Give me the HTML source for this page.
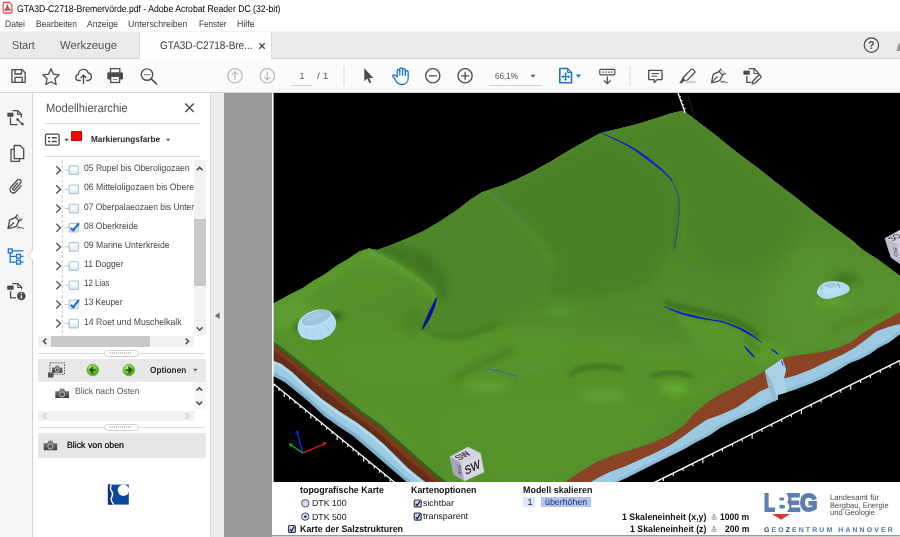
<!DOCTYPE html>
<html lang="de"><head><meta charset="utf-8"><title>GTA3D-C2718-Bremervörde.pdf - Adobe Acrobat Reader DC (32-bit)</title>
<style>
html,body{margin:0;padding:0;}
body{width:900px;height:537px;overflow:hidden;position:relative;background:#fff;font-family:'Liberation Sans', sans-serif;}
.a{position:absolute;}
.t{position:absolute;white-space:pre;font-family:'Liberation Sans', sans-serif;text-rendering:geometricPrecision;}
svg{position:absolute;overflow:visible;}
</style></head><body>
<!-- window chrome -->
<div class="a" style="left:0;top:0;width:900px;height:32px;background:#fff"></div>
<div class="a" style="left:0;top:31px;width:900px;height:1px;background:#f1f1f1"></div>
<div class="a" style="left:0;top:32px;width:900px;height:26px;background:#eaeaea"></div>
<div class="a" style="left:0;top:58px;width:900px;height:1px;background:#d4d4d4"></div>
<div class="a" style="left:138.800px;top:32px;width:133.500px;height:27px;background:#fefefe;border-left:1px solid #dcdcdc;border-right:1px solid #dcdcdc;box-sizing:border-box"></div>
<div class="a" style="left:0;top:59px;width:900px;height:33px;background:#fbfbfb"></div>
<div class="a" style="left:0;top:92px;width:900px;height:1px;background:#d6d6d6"></div>
<!-- left rail -->
<div class="a" style="left:0;top:93px;width:32px;height:444px;background:#f6f6f6"></div>
<div class="a" style="left:32px;top:93px;width:1px;height:444px;background:#d2d2d2"></div>
<!-- panel -->
<div class="a" style="left:33px;top:93px;width:177px;height:444px;background:#fff"></div>
<div class="a" style="left:210px;top:93px;width:1px;height:444px;background:#dcdcdc"></div>
<div class="a" style="left:211px;top:93px;width:13px;height:444px;background:#ededed"></div>
<div class="a" style="left:224px;top:93px;width:48px;height:444px;background:#999"></div>
<div class="a" style="left:272px;top:93px;width:628px;height:444px;background:#999"></div>
<!-- panel pieces -->
<div class="a" style="left:45px;top:123px;width:155px;height:1px;background:#dadada"></div>
<div class="a" style="left:45px;top:155.5px;width:155px;height:1px;background:#dadada"></div>
<div class="a" style="left:70.8px;top:130.9px;width:10.8px;height:10.5px;background:#f80000"></div>
<!-- tree vscroll -->
<div class="a" style="left:194px;top:160px;width:11.5px;height:176px;background:#f1f1f1"></div>
<div class="a" style="left:194px;top:219px;width:11.5px;height:66.5px;background:#c9c9c9"></div>
<!-- tree hscroll -->
<div class="a" style="left:38px;top:336px;width:156px;height:10.5px;background:#f1f1f1"></div>
<div class="a" style="left:50.5px;top:336px;width:99px;height:10.5px;background:#c9c9c9"></div>
<!-- splitters -->
<div class="a" style="left:38px;top:352.7px;width:167px;height:1px;background:#dcdcdc"></div>
<div class="a" style="left:104px;top:349.5px;width:34.5px;height:7.5px;border:1px solid #d0d0d0;border-radius:4px;background:#fff;box-sizing:border-box"></div>
<div class="a" style="left:110px;top:351.8px;width:22px;height:2.6px;background:repeating-linear-gradient(90deg,#c4c4c4 0 1px,#fff 1px 2px)"></div>
<div class="a" style="left:38px;top:427px;width:167px;height:1px;background:#dcdcdc"></div>
<div class="a" style="left:104px;top:423.6px;width:34.5px;height:7.5px;border:1px solid #d0d0d0;border-radius:4px;background:#fff;box-sizing:border-box"></div>
<div class="a" style="left:110px;top:425.9px;width:22px;height:2.6px;background:repeating-linear-gradient(90deg,#c4c4c4 0 1px,#fff 1px 2px)"></div>
<!-- options bar -->
<div class="a" style="left:38px;top:358.5px;width:167.5px;height:23.2px;background:#e8e8e8"></div>
<!-- view list scrollbars -->
<div class="a" style="left:193.6px;top:381.7px;width:12px;height:27px;background:#f7f7f7"></div>
<div class="a" style="left:38px;top:410.7px;width:155.6px;height:10.6px;background:#f1f1f1"></div>
<!-- blick von oben bar -->
<div class="a" style="left:38px;top:433px;width:167.5px;height:24.7px;background:#e6e6e6"></div>

<svg class="a" style="left:0;top:0" width="900" height="537" viewBox="0 0 900 537" fill="none">
<!-- pdf icon -->
<path d="M4.100 2.400h5.300l2.500 2.500v7.300a.9.900 0 0 1-.9.900H4.100a.9.900 0 0 1-.9-.9V3.300a.9.900 0 0 1 .9-.9z" fill="#fff" stroke="#f03b3b" stroke-width="1.100"/>
<path d="M5.100 10.400c1.300-.9 2-2.500 2.200-4.900M7.300 5.500c.3 2.300 1.300 3.800 2.800 4.500M5.100 10.400c1.600-1 3.300-1.200 5-.4" stroke="#f03030" stroke-width="1.500" stroke-linecap="round"/>
<!-- tab close -->
<path d="M259.300 43.300l5.400 5.400M264.700 43.300l-5.400 5.400" stroke="#444" stroke-width="1.300"/>
<!-- help -->
<circle cx="871.400" cy="45.100" r="7.200" stroke="#4a4a4a" stroke-width="1.200"/>
<text x="871.400" y="48.700" font-size="10" font-weight="700" text-anchor="middle" fill="#4a4a4a" font-family="Liberation Sans, sans-serif">?</text>
<!-- bell partial -->
<path d="M896 51c.8-1 1.300-2 1.500-4.500.2-2 1.200-3.200 2.500-3.600V51z" fill="#9a9a9a"/>
<!-- save -->
<g stroke="#4b4b4b" stroke-width="1.300" stroke-linejoin="round">
<path d="M11.900 69.700h10.300l3 3v9.600h-13.300z"/>
<path d="M15 69.700v4.300h6.500v-4.300M15 82.300v-5h7.200v5"/>
</g>
<!-- star -->
<path d="M51 68.800l2.500 5.300 5.700.7-4.200 4 1.100 5.700-5.100-2.800-5.100 2.800 1.100-5.700-4.200-4 5.700-.7z" stroke="#4b4b4b" stroke-width="1.300" stroke-linejoin="round"/>
<!-- cloud upload -->
<path d="M80.300 80.500h-1.300c-1.800 0-3.200-1.400-3.200-3.100 0-1.600 1.100-2.800 2.600-3.100.2-2.800 2.300-4.900 5-4.900 2.300 0 4.200 1.500 4.800 3.600 1.800.2 3.200 1.700 3.200 3.600 0 2.100-1.600 3.800-3.600 3.900h-1.100" stroke="#4b4b4b" stroke-width="1.300" stroke-linecap="round"/>
<path d="M83.500 84v-8.500M80.600 78l2.900-2.900 2.900 2.900" stroke="#4b4b4b" stroke-width="1.300"/>
<!-- printer -->
<path d="M110.500 72.500v-3.800h9.300v3.800" stroke="#4b4b4b" stroke-width="1.300"/>
<rect x="107.300" y="72.300" width="15.700" height="7.200" rx="1.200" fill="#4b4b4b"/>
<rect x="110.700" y="76.300" width="8.900" height="6.200" fill="#fbfbfb" stroke="#4b4b4b" stroke-width="1.300"/>
<path d="M113 79.500h4.300" stroke="#888" stroke-width="1"/>
<!-- search -->
<circle cx="147" cy="74.600" r="5.700" stroke="#4b4b4b" stroke-width="1.400"/>
<path d="M151.200 78.800l5.300 5.200" stroke="#4b4b4b" stroke-width="1.700" stroke-linecap="round"/>
<path d="M144.200 74.600h1.200M146.400 74.600h1.200M148.600 74.600h1.200" stroke="#4b4b4b" stroke-width="1.200"/>
<!-- up / down (disabled) -->
<g stroke="#b9b9b9" stroke-width="1.200">
<circle cx="235" cy="75.800" r="7.200"/><path d="M235 80v-8M231.800 74.800l3.200-3.200 3.200 3.200"/>
<circle cx="267.300" cy="75.800" r="7.200"/><path d="M267.300 71.600v8M264.100 76.800l3.200 3.200 3.200-3.200"/>
</g>
<!-- page field underline -->
<path d="M291 85.500h21" stroke="#d0d0d0" stroke-width="1"/>
<path d="M344 66v20M630 66v20" stroke="#d9d9d9" stroke-width="1"/>
<!-- arrow cursor -->
<path d="M364.300 68.300v13l3-2.700 2.100 4.700 1.900-.8-2.100-4.600h4.200z" fill="#4b4b4b"/>
<!-- hand -->
<path d="M395 79.300L392.900 76.500C392.300 75.300 393.600 74 394.800 74.900L397.200 77V70.900C397.200 69 399.800 69 399.800 70.900V69.300C399.800 67.300 402.600 67.300 402.600 69.300V70C402.600 68.200 405.300 68.200 405.300 70V72C405.300 70.300 408.200 70.300 408.200 72V78C408.200 82 405.500 84.500 401.700 84.500C398.500 84.500 396.500 82.500 395 79.300Z" stroke="#1b73d8" stroke-width="1.300" stroke-linejoin="round"/>
<path d="M399.800 70.900V75.700M402.600 70V75.700M405.300 71.500V75.900" stroke="#1b73d8" stroke-width="1.200"/>
<!-- minus / plus -->
<g stroke="#4b4b4b" stroke-width="1.300">
<circle cx="432.800" cy="75.800" r="7.100"/><path d="M428.800 75.800h8"/>
<circle cx="465.100" cy="75.800" r="7.100"/><path d="M461.100 75.800h8M465.100 71.800v8"/>
</g>
<!-- zoom field -->
<path d="M489 85.500h52.500" stroke="#d0d0d0" stroke-width="1"/>
<path d="M530.600 74.800h4.800l-2.400 2.900z" fill="#555"/>
<!-- fit page (blue) -->
<path d="M559.800 68.500h7.500l4.200 4.200v10.100h-11.700z" stroke="#1b73d8" stroke-width="1.600" stroke-linejoin="round"/>
<path d="M567.500 68.700v3.800h3.800" stroke="#1b73d8" stroke-width="1"/>
<path d="M565.600 73.500v6.400M562.400 76.700h6.400" stroke="#1b73d8" stroke-width="1.200"/>
<path d="M564 74.300l1.600-2 1.600 2zM564 79.100l1.600 2 1.600-2zM563.200 75.100l-2 1.600 2 1.600zM568 75.100l2 1.600-2 1.600z" fill="#1b73d8"/>
<path d="M575.800 74.600h5.200l-2.600 3.100z" fill="#1b73d8"/>
<!-- scroll mode -->
<rect x="599.800" y="69.300" width="15" height="5.600" rx=".8" stroke="#4b4b4b" stroke-width="1.200"/>
<path d="M602.500 72.100h1.500M605.300 72.100h1.500M608.100 72.100h1.500M610.900 72.100h1.500" stroke="#4b4b4b" stroke-width="1.200"/>
<path d="M607.300 76.500v7M604 80.500l3.300 3.200 3.300-3.200" stroke="#4b4b4b" stroke-width="1.300"/>
<!-- comment -->
<path d="M648.700 70.300h13.300v9.300h-5l-2.800 3v-3h-5.500z" stroke="#4b4b4b" stroke-width="1.300" stroke-linejoin="round"/>
<path d="M651.500 73.600h7.700M651.500 76.200h5.700" stroke="#4b4b4b" stroke-width="1"/>
<!-- highlighter -->
<path d="M684.600 80.300l-1.700-2.600 8.300-8.300c1.300-1.300 4.700 2.100 3.400 3.400l-8.300 8.300z" stroke="#4b4b4b" stroke-width="1.300" stroke-linejoin="round"/>
<path d="M679.200 83.300l3.300-5.300 2.400 2.400-3.300 2.900z" fill="#4b4b4b"/>
<path d="M685 82h10.600" stroke="#d2d2d2" stroke-width="2.600"/>
<!-- sign pen (toolbar) -->
<g stroke="#4b4b4b" stroke-width="1.300" stroke-linejoin="round">
<path d="M711.500 82.600l1.700-8.200 5.800-2.800 3.500 3.300-2.600 5.600-4.700 1.600z"/>
<path d="M719.700 71.300l1.600-2.400 4.200 4.200-2.600 1.300z" fill="#d2d2d2" stroke="none"/>
<path d="M719 71.600l2.100-3M722.500 74.900l3.200-1.400"/>
<path d="M711.900 82.200l5-5" stroke-width="1.100"/>
<circle cx="717" cy="77.100" r=".8" fill="#4b4b4b" stroke="none"/>
<path d="M720.800 82.600c.7-2 1.500-2.400 1.600-.2.400-1.700 1.200-1.600 1.400 0 .5-1 1.200-1 1.700 0h2" stroke-width=".9"/>
</g>
<!-- doc edit -->
<g stroke="#4b4b4b" stroke-width="1.300" stroke-linejoin="round">
<path d="M748.500 68.600h5.700l4.600 4.800v2.200M746.800 76v6.300h4.600"/>
<path d="M754 68.800v4.700h4.600" stroke-width="1.100"/>
<rect x="743.800" y="71" width="5.600" height="3.300" fill="#4b4b4b" stroke-width=".8"/>
<path d="M752.200 83.900l.9-3.200 5.500-5.400c1.100-1 3.300 1.200 2.200 2.300l-5.500 5.400z"/>
</g>
<!-- left rail icons -->
<g stroke="#4b4b4b" stroke-width="1.300" stroke-linejoin="round">
<path d="M12.500 110.600h5.300l3.600 3.600v3.300M10.500 117.500v7.100h7"/>
<path d="M17.600 110.800v3.600h3.600" stroke-width="1.100"/>
<rect x="7.700" y="113.100" width="5.400" height="3.200" fill="#4b4b4b" stroke-width=".8"/>
<path d="M17.700 119.600l4.600 4.500" stroke-width="1.200"/><circle cx="17.600" cy="119.600" r="1.300" fill="#4b4b4b" stroke="none"/><circle cx="22.400" cy="124.100" r="1.400" fill="#4b4b4b" stroke="none"/>
<!-- pages -->
<path d="M14.200 145.500h6l3.500 3.500v9.700h-9.500z"/><path d="M14 149.300h-3v12h8.500v-2.600"/>
</g>
<!-- paperclip -->
<path transform="translate(16.200 186.300) rotate(42)" d="M3.300-3.800V4.300a3.300 3.300 0 0 1-6.600 0V-5.200a2.200 2.200 0 0 1 4.400 0V3.600a1.100 1.100 0 0 1-2.200 0V-3.600" stroke="#4b4b4b" stroke-width="1.300" stroke-linecap="round"/>
<!-- pen -->
<g transform="translate(-703.500 145.800)" stroke="#4b4b4b" stroke-width="1.300" stroke-linejoin="round">
<path d="M711.500 82.600l1.700-8.200 5.800-2.800 3.500 3.300-2.600 5.600-4.700 1.600z"/>
<path d="M719.700 71.300l1.600-2.400 4.200 4.200-2.600 1.300z" fill="#d2d2d2" stroke="none"/>
<path d="M719 71.600l2.100-3M722.500 74.900l3.200-1.400"/>
<path d="M711.900 82.200l5-5" stroke-width="1.100"/>
<circle cx="717" cy="77.100" r=".8" fill="#4b4b4b" stroke="none"/>
<path d="M720.800 82.600c.7-2 1.500-2.400 1.600-.2.400-1.700 1.200-1.600 1.400 0 .5-1 1.200-1 1.700 0h2" stroke-width=".9"/>
</g>
<!-- tree icon (active, blue) -->
<g stroke="#1b73d8" stroke-width="1.300">
<rect x="8.300" y="249" width="3.800" height="3.800" fill="#fff"/>
<path d="M12 250.900h11.500M10.200 252.800v9.300h6.300M10.200 256.300h6.300"/>
<rect x="16.600" y="254.400" width="3.800" height="3.800" fill="#fff"/>
<rect x="16.600" y="260.300" width="3.800" height="3.800" fill="#fff"/>
<path d="M20.500 256.300h3M20.500 262.200h3"/>
</g>
<!-- notch -->
<path d="M33 250l-4.500 5.500 4.500 5.500z" fill="#fff"/>
<path d="M32.500 250l-4.500 5.500 4.500 5.500" stroke="#d2d2d2" stroke-width="1"/>
<!-- doc info -->
<g stroke="#4b4b4b" stroke-width="1.300" stroke-linejoin="round">
<path d="M12.300 283.700h5.700l3.600 3.600v2.200M10.600 291v6.800h5.400"/>
<path d="M17.800 283.900v3.600h3.600" stroke-width="1.100"/>
<rect x="7.600" y="286" width="5.600" height="3.300" fill="#4b4b4b" stroke-width=".8"/>
</g>
<circle cx="21.300" cy="296" r="4.300" fill="#4b4b4b"/>
<path d="M21.300 295.300v3.200" stroke="#fff" stroke-width="1.300"/><circle cx="21.300" cy="293.500" r=".8" fill="#fff"/>
<!-- panel close -->
<path d="M185.300 103.600l8.500 8.500M193.800 103.600l-8.500 8.500" stroke="#4b4b4b" stroke-width="1.400"/>
<!-- list icon -->
<rect x="45.500" y="134.200" width="13.600" height="11" rx="1.200" stroke="#4b4b4b" stroke-width="1.300"/>
<path d="M48 137.800h2.300M48 141.500h2.300M51.800 137.800h5M51.800 141.500h5" stroke="#4b4b4b" stroke-width="1.500"/>
<path d="M64.300 138.800h4.600l-2.300 2.700z" fill="#4b4b4b"/>
<path d="M165.800 138.800h4.600l-2.300 2.700z" fill="#666"/>
<!-- collapse triangle -->
<path d="M219.500 312.300v6.800l-4.500-3.400z" fill="#6a6a6a"/>
<!-- scroll arrows -->
<g stroke="#4b4b4b" stroke-width="1.500">
<path d="M196.800 170.300l2.900-2.900 2.900 2.900"/>
<path d="M196.800 327.300l2.900 2.900 2.900-2.900"/>
<path d="M46.300 338.500l-2.800 2.800 2.800 2.800"/>
<path d="M185.700 338.500l2.800 2.800-2.800 2.800"/>
<path d="M196.400 390.600l2.900-2.900 2.900 2.900"/>
<path d="M196.400 401.600l2.900 2.900 2.900-2.900"/>
</g>
<g stroke="#c3c3c3" stroke-width="1.300">
<path d="M46.300 413.200l-2.800 2.800 2.800 2.800"/>
<path d="M185.700 413.200l2.800 2.800-2.800 2.800"/>
</g>
<path d="M193 368.800h4.800l-2.400 2.800z" fill="#666"/>
</svg>

<svg class="a" style="left:0;top:0" width="900" height="537" viewBox="0 0 900 537" fill="none">
<defs><linearGradient id="cbg" x1="0" y1="0" x2="0" y2="1"><stop offset="0" stop-color="#fff"/><stop offset=".55" stop-color="#f4f7fb"/><stop offset="1" stop-color="#d9e4f0"/></linearGradient>
<radialGradient id="gb" cx=".4" cy=".3" r=".8"><stop offset="0" stop-color="#c6f08a"/><stop offset=".5" stop-color="#6fc52a"/><stop offset="1" stop-color="#3d8d16"/></radialGradient>
<linearGradient id="cam" x1="0" y1="0" x2="0" y2="1"><stop offset="0" stop-color="#8a8a8a"/><stop offset="1" stop-color="#3c3c3c"/></linearGradient></defs>
<path d="M62.300 160v176" stroke="#c9c9c9" stroke-width="1" stroke-dasharray="3 2"/>
<path d="M56.300 166.20l4.200 4-4.200 4" stroke="#555" stroke-width="1.400"/>
<path d="M64.500 170.20h4.500" stroke="#c9c9c9" stroke-width="1"/>
<rect x="69.200" y="165.90" width="9.200" height="8.600" rx="1" fill="url(#cbg)" stroke="#a9c3de" stroke-width="1.100"/>
<path d="M56.300 185.38l4.200 4-4.200 4" stroke="#555" stroke-width="1.400"/>
<path d="M64.500 189.38h4.500" stroke="#c9c9c9" stroke-width="1"/>
<rect x="69.200" y="185.07" width="9.200" height="8.600" rx="1" fill="url(#cbg)" stroke="#a9c3de" stroke-width="1.100"/>
<path d="M56.300 204.55l4.200 4-4.200 4" stroke="#555" stroke-width="1.400"/>
<path d="M64.500 208.55h4.500" stroke="#c9c9c9" stroke-width="1"/>
<rect x="69.200" y="204.25" width="9.200" height="8.600" rx="1" fill="url(#cbg)" stroke="#a9c3de" stroke-width="1.100"/>
<path d="M56.300 223.72l4.200 4-4.200 4" stroke="#555" stroke-width="1.400"/>
<path d="M64.500 227.72h4.500" stroke="#c9c9c9" stroke-width="1"/>
<rect x="69.200" y="223.42" width="9.200" height="8.600" rx="1" fill="url(#cbg)" stroke="#a9c3de" stroke-width="1.100"/>
<path d="M70.800 228.03l2.400 2.500 5.800-7.300" stroke="#2b6fc2" stroke-width="2.200" stroke-linejoin="round"/>
<path d="M56.300 242.90l4.200 4-4.200 4" stroke="#555" stroke-width="1.400"/>
<path d="M64.500 246.90h4.500" stroke="#c9c9c9" stroke-width="1"/>
<rect x="69.200" y="242.60" width="9.200" height="8.600" rx="1" fill="url(#cbg)" stroke="#a9c3de" stroke-width="1.100"/>
<path d="M56.300 262.07l4.200 4-4.200 4" stroke="#555" stroke-width="1.400"/>
<path d="M64.500 266.07h4.500" stroke="#c9c9c9" stroke-width="1"/>
<rect x="69.200" y="261.77" width="9.200" height="8.600" rx="1" fill="url(#cbg)" stroke="#a9c3de" stroke-width="1.100"/>
<path d="M56.300 281.25l4.200 4-4.200 4" stroke="#555" stroke-width="1.400"/>
<path d="M64.500 285.25h4.500" stroke="#c9c9c9" stroke-width="1"/>
<rect x="69.200" y="280.95" width="9.200" height="8.600" rx="1" fill="url(#cbg)" stroke="#a9c3de" stroke-width="1.100"/>
<path d="M56.300 300.43l4.200 4-4.200 4" stroke="#555" stroke-width="1.400"/>
<path d="M64.500 304.43h4.500" stroke="#c9c9c9" stroke-width="1"/>
<rect x="69.200" y="300.12" width="9.200" height="8.600" rx="1" fill="url(#cbg)" stroke="#a9c3de" stroke-width="1.100"/>
<path d="M70.800 304.73l2.400 2.500 5.800-7.300" stroke="#2b6fc2" stroke-width="2.200" stroke-linejoin="round"/>
<path d="M56.300 319.60l4.200 4-4.200 4" stroke="#555" stroke-width="1.400"/>
<path d="M64.500 323.60h4.500" stroke="#c9c9c9" stroke-width="1"/>
<rect x="69.200" y="319.30" width="9.200" height="8.600" rx="1" fill="url(#cbg)" stroke="#a9c3de" stroke-width="1.100"/>
<circle cx="92.7" cy="370" r="5.800" fill="url(#gb)" stroke="#4a9a1c" stroke-width=".6"/>
<path d="M95.90 370h-4.00M92.50 367.300l-2.90 2.700l2.90 2.700z" stroke="#1f5c08" stroke-width="1.300" fill="#1f5c08"/>
<circle cx="128.8" cy="370" r="5.800" fill="url(#gb)" stroke="#4a9a1c" stroke-width=".6"/>
<path d="M125.60 370h4.00M129.00 367.300l2.90 2.700l-2.90 2.700z" stroke="#1f5c08" stroke-width="1.300" fill="#1f5c08"/>
<path d="M55.3 391.16h3.84l1.10 -2.66h3.84l1.10 2.66h3.84v6.84h-13.7z" fill="url(#cam)"/><circle cx="62.15" cy="394.39" r="2.57" fill="#555" stroke="#c9c9c9" stroke-width=".9"/>
<path d="M43.7 443.29h3.78l1.08 -2.69h3.78l1.08 2.69h3.78v6.91h-13.5z" fill="url(#cam)"/><circle cx="50.45" cy="446.55" r="2.59" fill="#555" stroke="#c9c9c9" stroke-width=".9"/>
<rect x="50" y="362.800" width="14.500" height="11.500" stroke="#555" stroke-width="1" stroke-dasharray="1.500 1.200"/>
<path d="M52 367.52h2.94l0.84 -2.02h2.94l0.84 2.02h2.94v5.18h-10.5z" fill="url(#cam)"/><circle cx="57.25" cy="369.96" r="1.94" fill="#555" stroke="#c9c9c9" stroke-width=".9"/>
<path d="M48 372.500h5.500v5h-5.500z" fill="#555"/>
<rect x="107.900" y="484.600" width="20.900" height="20" fill="#0b469f"/>
<path d="M107.900 484.600h3.500c-1.600 3-1 5 .3 6.800 1.400 2 1.300 3.600 0 5.600-1.100 1.700-.6 3.500.8 5.600l.9 2h-5.500z" fill="#0a3280"/>
<circle cx="123.500" cy="490.200" r="5.700" fill="#fff"/>
<path d="M111.300 484.600c-1.500 3-1 5 .4 6.900 1.500 2.100 1.300 3.700 0 5.700-1.100 1.700-.6 3.400.8 5.500l1.300 1.900" stroke="#fff" stroke-width="1.400"/>
</svg>
<svg class="a" style="left:272px;top:93px;overflow:hidden" width="628" height="389.5" viewBox="272 93 628 389.5">
<defs>
<filter id="b1" x="-60%" y="-60%" width="220%" height="220%"><feGaussianBlur stdDeviation="1.2"/></filter>
<filter id="b2" x="-60%" y="-60%" width="220%" height="220%"><feGaussianBlur stdDeviation="2"/></filter>
<filter id="b3" x="-60%" y="-60%" width="220%" height="220%"><feGaussianBlur stdDeviation="3"/></filter>
<filter id="b4" x="-60%" y="-60%" width="220%" height="220%"><feGaussianBlur stdDeviation="4"/></filter>
<filter id="b5" x="-60%" y="-60%" width="220%" height="220%"><feGaussianBlur stdDeviation="5"/></filter>
<filter id="b6" x="-60%" y="-60%" width="220%" height="220%"><feGaussianBlur stdDeviation="6"/></filter>
<filter id="b8" x="-60%" y="-60%" width="220%" height="220%"><feGaussianBlur stdDeviation="8"/></filter>
<filter id="b10" x="-60%" y="-60%" width="220%" height="220%"><feGaussianBlur stdDeviation="10"/></filter>
<filter id="b14" x="-60%" y="-60%" width="220%" height="220%"><feGaussianBlur stdDeviation="14"/></filter>
<filter id="b18" x="-60%" y="-60%" width="220%" height="220%"><feGaussianBlur stdDeviation="18"/></filter>
<linearGradient id="ridgeD" gradientUnits="userSpaceOnUse" x1="400" y1="267" x2="419" y2="240"><stop offset="0" stop-color="#40711f" stop-opacity="1"/><stop offset=".35" stop-color="#447722" stop-opacity=".8"/><stop offset="1" stop-color="#4a7f26" stop-opacity="0"/></linearGradient>
<linearGradient id="ridgeL" gradientUnits="userSpaceOnUse" x1="400" y1="267" x2="390" y2="282"><stop offset="0" stop-color="#5e9f30" stop-opacity="1"/><stop offset="1" stop-color="#5a982e" stop-opacity="0"/></linearGradient>
<linearGradient id="blg" x1="0" y1="0" x2="0" y2="1"><stop offset="0" stop-color="#b6dbee"/><stop offset="1" stop-color="#86b6d2"/></linearGradient>

<clipPath id="gclip"><polygon points="265.0,308.0 273.7,303.6 288.6,295.2 303.5,287.7 312.8,281.2 325.9,273.8 337.0,265.4 348.2,258.9 359.4,251.4 368.7,248.6 377.1,250.1 389.2,245.8 400.4,241.2 411.6,236.5 425.6,230.0 438.6,222.2 457.2,210.1 470.3,199.8 481.5,192.4 490.8,189.2 503.8,184.9 518.7,178.4 531.8,171.9 550.4,161.7 569.0,150.5 584.9,141.4 600.7,133.0 616.6,129.3 635.2,124.7 653.8,119.1 670.6,113.5 682.7,110.7 691.0,116.3 700.4,123.7 711.6,132.1 730.0,147.0 740.0,154.7 758.6,168.6 777.3,183.5 795.9,197.5 814.5,212.4 833.1,226.4 851.8,240.3 862.9,250.0 878.0,259.5 900.0,276.0 910.0,283.4 910.0,306.5 900.0,311.9 889.0,318.0 874.1,325.9 861.1,334.3 851.8,341.7 836.9,348.2 822.0,352.0 805.2,354.2 788.4,356.4 782.4,358.6 764.7,370.7 754.5,377.3 735.9,386.6 717.2,395.9 706.1,403.3 694.9,412.6 684.4,424.9 670.2,434.7 652.4,442.7 631.1,449.8 613.3,455.1 595.6,462.2 581.3,471.1 565.3,481.8 553.0,490.0 456.0,490.0 446.7,481.8 437.8,474.7 425.3,464.0 411.1,451.6 393.3,435.6 381.8,425.0 363.1,412.0 344.5,397.0 325.9,382.2 307.2,367.3 288.6,352.3 273.7,341.2 265.0,335.0"/></clipPath>
<clipPath id="rR"><polygon points="369.500,248.800 392,260.500 412,273.500 431,286.500 437,298 438,312 540,312 540,140 369.500,140"/></clipPath>
<clipPath id="rL"><polygon points="369.500,248.800 392,260.500 412,273.500 431,286.500 437,298 433,315 300,345 265,300 360,235"/></clipPath>
</defs>
<rect x="272" y="93" width="628" height="390" fill="#000"/>
<polygon points="265.0,308.0 273.7,303.6 288.6,295.2 303.5,287.7 312.8,281.2 325.9,273.8 337.0,265.4 348.2,258.9 359.4,251.4 368.7,248.6 377.1,250.1 389.2,245.8 400.4,241.2 411.6,236.5 425.6,230.0 438.6,222.2 457.2,210.1 470.3,199.8 481.5,192.4 490.8,189.2 503.8,184.9 518.7,178.4 531.8,171.9 550.4,161.7 569.0,150.5 584.9,141.4 600.7,133.0 616.6,129.3 635.2,124.7 653.8,119.1 670.6,113.5 682.7,110.7 691.0,116.3 700.4,123.7 711.6,132.1 730.0,147.0 740.0,154.7 758.6,168.6 777.3,183.5 795.9,197.5 814.5,212.4 833.1,226.4 851.8,240.3 862.9,250.0 878.0,259.5 900.0,276.0 910.0,283.4 910.0,330.0 900.0,334.3 889.0,342.6 877.8,348.2 870.4,353.8 859.2,359.4 849.9,363.1 840.0,368.9 825.3,377.3 810.4,383.8 795.5,389.4 786.2,392.4 777.8,395.0 777.8,399.6 765.7,405.2 754.5,411.7 735.9,420.1 721.0,427.5 709.3,435.6 695.1,442.7 684.4,448.9 670.2,456.0 656.0,463.1 638.2,472.0 625.8,478.2 617.8,481.8 602.0,490.0 420.0,494.0 409.0,484.4 404.8,480.6 396.8,473.6 382.7,461.5 366.6,447.4 352.5,435.4 338.4,426.3 324.3,416.2 308.2,401.2 292.1,388.1 284.9,382.2 273.7,376.2 265.0,372.0" fill="#9ccae2"/>
<polyline points="420.0,494.0 409.0,484.4 404.8,480.6 396.8,473.6 382.7,461.5 366.6,447.4 352.5,435.4 338.4,426.3 324.3,416.2 308.2,401.2 292.1,388.1 284.9,382.2 273.7,376.2 265.0,372.0" fill="none" stroke="#7fb0cc" stroke-width="7" stroke-linejoin="round"/>
<polyline points="910.0,330.0 900.0,334.3 889.0,342.6 877.8,348.2 870.4,353.8 859.2,359.4 849.9,363.1 840.0,368.9 825.3,377.3 810.4,383.8 795.5,389.4 786.2,392.4 777.8,395.0 777.8,399.6 765.7,405.2 754.5,411.7 735.9,420.1 721.0,427.5 709.3,435.6 695.1,442.7 684.4,448.9 670.2,456.0 656.0,463.1 638.2,472.0 625.8,478.2 617.8,481.8 602.0,490.0" fill="none" stroke="#8dbdd8" stroke-width="6" stroke-linejoin="round"/>
<polygon points="420.0,494.0 409.0,484.4 404.8,480.6 396.8,473.6 382.7,461.5 366.6,447.4 352.5,435.4 338.4,426.3 324.3,416.2 308.2,401.2 292.1,388.1 284.9,382.2 273.7,376.2 265.0,372.0 265.0,500.0 420.0,500.0" fill="#000"/>
<polygon points="910.0,330.0 900.0,334.3 889.0,342.6 877.8,348.2 870.4,353.8 859.2,359.4 849.9,363.1 840.0,368.9 825.3,377.3 810.4,383.8 795.5,389.4 786.2,392.4 777.8,395.0 777.8,399.6 765.7,405.2 754.5,411.7 735.9,420.1 721.0,427.5 709.3,435.6 695.1,442.7 684.4,448.9 670.2,456.0 656.0,463.1 638.2,472.0 625.8,478.2 617.8,481.8 602.0,490.0 602.0,500.0 910.0,500.0" fill="#000"/>
<polygon points="265.0,308.0 273.7,303.6 288.6,295.2 303.5,287.7 312.8,281.2 325.9,273.8 337.0,265.4 348.2,258.9 359.4,251.4 368.7,248.6 377.1,250.1 389.2,245.8 400.4,241.2 411.6,236.5 425.6,230.0 438.6,222.2 457.2,210.1 470.3,199.8 481.5,192.4 490.8,189.2 503.8,184.9 518.7,178.4 531.8,171.9 550.4,161.7 569.0,150.5 584.9,141.4 600.7,133.0 616.6,129.3 635.2,124.7 653.8,119.1 670.6,113.5 682.7,110.7 691.0,116.3 700.4,123.7 711.6,132.1 730.0,147.0 740.0,154.7 758.6,168.6 777.3,183.5 795.9,197.5 814.5,212.4 833.1,226.4 851.8,240.3 862.9,250.0 878.0,259.5 900.0,276.0 910.0,283.4 910.0,322.0 900.0,324.0 889.0,326.8 876.0,331.5 866.7,338.9 855.5,347.3 844.3,353.8 840.0,355.8 825.3,362.4 810.4,369.8 795.5,375.4 785.2,378.2 771.3,386.6 760.1,391.2 750.8,397.7 735.9,408.0 721.0,414.5 706.1,420.1 695.1,427.6 684.4,435.6 670.2,445.3 656.0,452.4 638.2,460.4 624.0,466.7 609.8,472.0 599.1,477.3 591.1,481.8 577.0,490.0 434.0,490.0 425.3,481.8 416.4,474.7 407.6,467.6 393.3,453.3 384.4,444.4 372.0,433.8 357.8,423.1 340.0,411.6 322.1,398.9 307.2,385.9 292.3,371.9 281.2,363.5 273.7,360.7 265.0,358.0" fill="#8a4325"/>
<polygon points="453.9,492.3 444.6,484.1 435.7,477.0 423.2,466.3 409.0,453.9 391.2,437.9 379.7,427.3 361.0,414.3 342.4,399.3 323.8,384.5 305.1,369.6 286.5,354.6 271.6,343.5 262.9,337.3 265.0,358.0 273.7,360.7 281.2,363.5 292.3,371.9 307.2,385.9 322.1,398.9 340.0,411.6 357.8,423.1 372.0,433.8 384.4,444.4 393.3,453.3 407.6,467.6 416.4,474.7 425.3,481.8 434.0,490.0" fill="#632e19"/>
<polyline points="453.9,492.3 444.6,484.1 435.7,477.0 423.2,466.3 409.0,453.9 391.2,437.9 379.7,427.3 361.0,414.3 342.4,399.3 323.8,384.5 305.1,369.6 286.5,354.6 271.6,343.5 262.9,337.3" fill="none" stroke="#87411f" stroke-width="3.200" transform="translate(-1.500 1.800)" filter="url(#b1)"/>
<polyline points="434.0,490.0 425.3,481.8 416.4,474.7 407.6,467.6 393.3,453.3 384.4,444.4 372.0,433.8 357.8,423.1 340.0,411.6 322.1,398.9 307.2,385.9 292.3,371.9 281.2,363.5 273.7,360.7 265.0,358.0" fill="none" stroke="#b4daee" stroke-width="2.500" transform="translate(-1.200 1.800)"/>
<polygon points="265.0,308.0 273.7,303.6 288.6,295.2 303.5,287.7 312.8,281.2 325.9,273.8 337.0,265.4 348.2,258.9 359.4,251.4 368.7,248.6 377.1,250.1 389.2,245.8 400.4,241.2 411.6,236.5 425.6,230.0 438.6,222.2 457.2,210.1 470.3,199.8 481.5,192.4 490.8,189.2 503.8,184.9 518.7,178.4 531.8,171.9 550.4,161.7 569.0,150.5 584.9,141.4 600.7,133.0 616.6,129.3 635.2,124.7 653.8,119.1 670.6,113.5 682.7,110.7 691.0,116.3 700.4,123.7 711.6,132.1 730.0,147.0 740.0,154.7 758.6,168.6 777.3,183.5 795.9,197.5 814.5,212.4 833.1,226.4 851.8,240.3 862.9,250.0 878.0,259.5 900.0,276.0 910.0,283.4 910.0,306.5 900.0,311.9 889.0,318.0 874.1,325.9 861.1,334.3 851.8,341.7 836.9,348.2 822.0,352.0 805.2,354.2 788.4,356.4 782.4,358.6 764.7,370.7 754.5,377.3 735.9,386.6 717.2,395.9 706.1,403.3 694.9,412.6 684.4,424.9 670.2,434.7 652.4,442.7 631.1,449.8 613.3,455.1 595.6,462.2 581.3,471.1 565.3,481.8 553.0,490.0 453.9,492.3 444.6,484.1 435.7,477.0 423.2,466.3 409.0,453.9 391.2,437.9 379.7,427.3 361.0,414.3 342.4,399.3 323.8,384.5 305.1,369.6 286.5,354.6 271.6,343.5 262.9,337.3" fill="#356319"/>
<polygon points="265.0,308.0 273.7,303.6 288.6,295.2 303.5,287.7 312.8,281.2 325.9,273.8 337.0,265.4 348.2,258.9 359.4,251.4 368.7,248.6 377.1,250.1 389.2,245.8 400.4,241.2 411.6,236.5 425.6,230.0 438.6,222.2 457.2,210.1 470.3,199.8 481.5,192.4 490.8,189.2 503.8,184.9 518.7,178.4 531.8,171.9 550.4,161.7 569.0,150.5 584.9,141.4 600.7,133.0 616.6,129.3 635.2,124.7 653.8,119.1 670.6,113.5 682.7,110.7 691.0,116.3 700.4,123.7 711.6,132.1 730.0,147.0 740.0,154.7 758.6,168.6 777.3,183.5 795.9,197.5 814.5,212.4 833.1,226.4 851.8,240.3 862.9,250.0 878.0,259.5 900.0,276.0 910.0,283.4 910.0,306.5 900.0,311.9 889.0,318.0 874.1,325.9 861.1,334.3 851.8,341.7 836.9,348.2 822.0,352.0 805.2,354.2 788.4,356.4 782.4,358.6 764.7,370.7 754.5,377.3 735.9,386.6 717.2,395.9 706.1,403.3 694.9,412.6 684.4,424.9 670.2,434.7 652.4,442.7 631.1,449.8 613.3,455.1 595.6,462.2 581.3,471.1 565.3,481.8 553.0,490.0 456.0,490.0 446.7,481.8 437.8,474.7 425.3,464.0 411.1,451.6 393.3,435.6 381.8,425.0 363.1,412.0 344.5,397.0 325.9,382.2 307.2,367.3 288.6,352.3 273.7,341.2 265.0,335.0" fill="#518a2a"/>
<g clip-path="url(#gclip)">
<path d="M265 300L369 247L392 260L412 274L431 286L437 298L424 330L445 341L482 333L520 318L600 330L700 345L790 330L830 300L910 270L910 320L780 360L700 410L560 490L440 490L265 340Z" fill="#56922c" filter="url(#b8)" opacity="1"/>
<path d="M790 240L862 250L910 283L910 312L860 335L800 352L760 320Z" fill="#56922d" filter="url(#b10)" opacity="1"/>
<path d="M610 138L683 110L740 155L810 210L790 250L740 280L695 265L680 230L681 200L674 180L648 158Z" fill="#4b8127" filter="url(#b10)" opacity="1"/>
<path d="M493 190L520 178L560 158L600 134L645 157L672 180L678 215L674 250L650 285L590 300L545 295L556 258L532 229Z" fill="#4a8026" filter="url(#b6)" opacity="1"/>
<path d="M400 245L440 222L470 200L490 190L530 230L552 258L540 300L500 323L481 332L460 339L444 340L430 336L440 300L436 285Z" fill="#4e8629" filter="url(#b6)" opacity="0.9"/>
<path d="M488 192L528 231L550 258" fill="none" stroke="#55902b" stroke-width="6" stroke-linecap="round" filter="url(#b3)" opacity="0.55"/>
<path d="M273 303L300 288L337 265L369 248L392 260L412 273L395 290L350 305L300 322L273 332Z" fill="#5d9d30" filter="url(#b4)" opacity="0.95"/>
<path d="M300 300L360 262L395 268L425 292L420 320L380 322L330 312Z" fill="#558f2c" filter="url(#b5)" opacity="0.9"/>
<g clip-path="url(#rL)"><path d="M366 250L392 261L412 274L431 287L437 298" fill="none" stroke="#5fa031" stroke-width="9" filter="url(#b3)" opacity=".9"/></g>
<g clip-path="url(#rR)"><path d="M362 244L392 256L414 269L434 284L441 301L447 297L446 277L428 254L396 244Z" fill="#427420" filter="url(#b3)" opacity=".95"/></g>
<ellipse cx="413" cy="320" rx="9" ry="12" fill="#4a7f26" filter="url(#b4)" opacity="0.8" transform="rotate(20 413 320)"/>
<path d="M424 327C431 335 443 338.500 456 337.500C470 336 484 331 498 324" fill="none" stroke="#457922" stroke-width="4" stroke-linecap="round" filter="url(#b2)" opacity="0.85"/>
<path d="M421 333C429 342 443 345.500 457 344.500C472 343 488 338 505 330" fill="none" stroke="#5b992e" stroke-width="5" stroke-linecap="round" filter="url(#b3)" opacity="0.9"/>
<path d="M330 350L425 343L470 352L520 336L580 345L540 370L440 380L360 380Z" fill="#58952d" filter="url(#b10)" opacity="0.7"/>
<ellipse cx="337" cy="316" rx="6" ry="4" fill="#36621b" filter="url(#b2)" opacity="0.9"/>
<ellipse cx="297.5" cy="327" rx="2.5" ry="5" fill="#36621b" filter="url(#b2)" opacity="0.8"/>
<path d="M457 378C468 368 490 360 512 350" fill="none" stroke="#3f6f1f" stroke-width="4" stroke-linecap="round" filter="url(#b3)" opacity="0.8"/>
<ellipse cx="486" cy="386" rx="24" ry="7" fill="#62a432" filter="url(#b5)" opacity="0.9"/>
<path d="M571 374C580 367 600 363 621 369" fill="none" stroke="#37631b" stroke-width="3.5" stroke-linecap="round" filter="url(#b2)" opacity="0.9"/>
<ellipse cx="603" cy="396" rx="24" ry="8" fill="#62a432" filter="url(#b5)" opacity="0.9"/>
<ellipse cx="561" cy="312" rx="18" ry="5" fill="#5a982e" filter="url(#b5)" opacity="0.9"/>
<path d="M653 376C662 371 678 371 689 376" fill="none" stroke="#37631b" stroke-width="3.5" stroke-linecap="round" filter="url(#b2)" opacity="0.9"/>
<ellipse cx="674" cy="389" rx="15" ry="6" fill="#68ad35" filter="url(#b4)" opacity="0.95"/>
<path d="M666 303C690 310 715 314 735 321C745 325 752 330 758 336" fill="none" stroke="#3a681d" stroke-width="4.5" stroke-linecap="round" filter="url(#b2)" opacity="0.85"/>
<path d="M680 321C700 325 720 328 738 336" fill="none" stroke="#5e9f30" stroke-width="7" stroke-linecap="round" filter="url(#b3)" opacity="0.8"/>
<path d="M742 338C750 346 756 350 764 352" fill="none" stroke="#3f6f1f" stroke-width="4" stroke-linecap="round" filter="url(#b2)" opacity="0.7"/>
<path d="M760 340L790 350L783 358L765 369L752 362Z" fill="#5c9c2f" filter="url(#b3)" opacity="0.8"/>
<path d="M681 325L720 324L745 335L755 350L735 360L700 352Z" fill="#5a982e" filter="url(#b5)" opacity="0.8"/>
<ellipse cx="845" cy="279" rx="14" ry="6" fill="#3c6b1e" filter="url(#b4)" opacity="0.8"/>
<ellipse cx="832" cy="303" rx="20" ry="6" fill="#62a432" filter="url(#b5)" opacity="0.85"/>
<path d="M830 330C850 322 870 316 890 308" fill="none" stroke="#457822" stroke-width="3" stroke-linecap="round" filter="url(#b3)" opacity="0.5"/>
<path d="M683 200C686 212 686 225 683 243" fill="none" stroke="#56922d" stroke-width="3.5" stroke-linecap="round" filter="url(#b2)" opacity="0.8"/>
<path d="M677 202C677 215 673 235 674 250" fill="none" stroke="#3f6f1f" stroke-width="2" stroke-linecap="round" filter="url(#b1)" opacity="0.6"/>
<path d="M440 410L600 400L680 425L600 465L520 480L450 460Z" fill="#58962d" filter="url(#b14)" opacity="0.6"/>
</g>
<polygon points="600.6,133.3 611.8,138.3 625.6,145.1 635.5,151.0 643.8,157.2 654.3,165.0 662.6,171.8 667.6,176.4 672.1,180.8 672.7,180.2 668.4,175.6 663.6,170.6 655.7,163.4 645.2,155.4 636.5,149.4 626.2,143.7 612.2,137.3 600.8,132.7" fill="#0a1fcf" opacity="1"/>
<path d="M663 171C672 180 677 188 679 200C680 215 677 232 674.500 248" fill="none" stroke="#1a3fb0" stroke-width="1.0" stroke-linecap="round" opacity="0.9"/>
<path d="M676 252C680 262 687 268 694 271" fill="none" stroke="#3a5fb0" stroke-width="0.8" stroke-linecap="round" opacity="0.6"/>
<path d="M491 189.500L532 229" fill="none" stroke="#44689a" stroke-width="0.9" stroke-linecap="round" opacity="0.8"/>
<path d="M436.400 297.500C435.800 307 430.500 319 422.300 329.600C424.500 320 431 309 436.400 297.500Z" fill="#0b0f9a" stroke="#0b0f9a" stroke-width=".7" stroke-linejoin="round"/>
<path d="M487 368.800C497 370 507 373 516 376.500" fill="none" stroke="#2c5fc0" stroke-width="1.0" stroke-linecap="round" opacity="0.9"/>
<path d="M517 365.500L538 369" fill="none" stroke="#5f8fb0" stroke-width="0.6" stroke-linecap="round" opacity="0.6"/>
<polygon points="663.9,306.6 671.8,310.4 681.2,314.2 690.8,316.8 699.9,318.8 709.9,320.3 720.9,322.0 729.7,325.1 739.3,329.3 746.5,333.2 753.3,337.2 757.7,340.0 761.6,342.6 762.0,342.2 758.3,339.2 754.1,336.0 747.5,331.6 740.1,327.5 730.3,323.7 721.3,320.8 710.1,318.9 700.3,317.0 691.2,314.8 681.8,312.4 672.2,309.2 664.1,306.0" fill="#0a1fcf" opacity="1"/>
<polygon points="744.2,346.1 746.8,350.4 750.3,354.3 754.5,357.7 755.1,357.3 751.7,352.9 748.2,349.2 744.6,345.7" fill="#0a1fcf" opacity="1"/>
<path d="M772 349.500L778 354" fill="none" stroke="#0a1fcf" stroke-width="1.3" stroke-linecap="round" opacity="1"/>
<polygon points="764.700,370.700 782.400,358.600 786.200,369.800 784.300,377.300 786.200,392.400 777.800,395 777.800,399.600 773.100,386.600 771.300,382.800" fill="#a9d2e6"/>
<polygon points="764.700,370.700 771.300,382.800 773.100,386.600 777.800,399.600 774,401.400 768,386" fill="#8fbdd6"/>
<path d="M781.500 360.500l1.500 5" stroke="#0a1fcf" stroke-width=".9"/>
<path d="M297.600 329.300C297.500 324 299 319.500 302.600 316.800C307 312.500 313 310 318.500 309.600C323 309.300 327.500 310.500 330.200 312.600C333.500 315 335.600 318 336.100 321.800C336.300 325.500 335.500 328.500 333.600 331C330 336 324 339.300 318.500 339.800C312 340.300 305.500 339.500 301.800 336.900C299.500 335 298 332.500 297.600 329.300Z" fill="#b3dbf3"/>
<path d="M297.600 329.300C299 332 300.500 334.500 301.800 336.900M306 330l1 8.500M313 331.500l.5 8.300M321 331l.8 8.600M328 327.500l1.200 8M333 322l1 8" stroke="#a3cfe9" stroke-width=".8" fill="none"/>
<ellipse cx="316.300" cy="318.300" rx="15.600" ry="7.600" fill="#bfe3f7" transform="rotate(-19 316.300 318.300)"/>
<ellipse cx="316.200" cy="317.800" rx="15" ry="6.700" fill="#9fc3dc" transform="rotate(-19 316.200 317.800)"/>
<ellipse cx="314.500" cy="316.800" rx="9" ry="3.300" fill="#a6cae2" transform="rotate(-19 314.500 316.800)"/>
<path d="M816.900 291.600C817.500 288.500 819.500 286 822.100 284.100C825 282 828 281.300 831.100 281.200C835 281 839 281.300 842.200 282.300C846.500 283.800 849.500 286 850 289C849.500 291.500 847 293.500 843.700 294.600C838 296.500 833 298.500 827.300 299C824 299 821 298 819.100 296.100C817.500 294.800 816.800 293.300 816.900 291.600Z" fill="#b2daf1"/>
<path d="M823.700 285.500C823.700 283 827 281.800 831.100 281.800C835.500 281.800 838.500 283 838.500 285.300L839 290C839 292.500 835 293.800 831.100 293.800C827 293.800 823.500 292.500 823.500 290.500Z" fill="#b9e1f6"/>
<ellipse cx="831.100" cy="285.300" rx="7.400" ry="2.700" fill="#a6cbe3"/>
<path d="M837.500 283.500C839 284.500 839.800 286 839.500 287.500" stroke="#5f7f98" stroke-width="1" fill="none" opacity=".8"/>
<path d="M822.500 285.500C821.500 287 821.500 288.500 822 290" stroke="#7f9fb8" stroke-width=".9" fill="none" opacity=".7"/>
<path d="M900.0 360.5L653.5 483.0" stroke="#fff" stroke-width="1.4"/>
<path d="M900.0 360.5v4.8M890.1 365.4v2.8M880.3 370.3v2.8M870.4 375.2v2.8M860.6 380.1v2.8M850.7 385.0v4.8M840.8 389.9v2.8M831.0 394.8v2.8M821.1 399.7v2.8M811.3 404.6v2.8M801.4 409.5v4.8M791.5 414.4v2.8M781.7 419.3v2.8M771.8 424.2v2.8M762.0 429.1v2.8M752.1 434.0v4.8M742.2 438.9v2.8M732.4 443.8v2.8M722.5 448.7v2.8M712.7 453.6v2.8M702.8 458.5v4.8M692.9 463.4v2.8M683.1 468.3v2.8M673.2 473.2v2.8M663.4 478.1v2.8M653.5 483.0v4.8" stroke="#fff" stroke-width="1.100"/>
<path d="M273.7 384.0L395.5 483.0" stroke="#fff" stroke-width="1.3"/>
<path d="M273.7 384.0v2.6M279.0 388.3v2.6M284.3 392.6v4.4M289.6 396.9v2.6M294.9 401.2v2.6M300.2 405.5v2.6M305.5 409.8v2.6M310.8 414.1v4.4M316.1 418.4v2.6M321.4 422.7v2.6M326.7 427.0v2.6M332.0 431.3v2.6M337.2 435.7v4.4M342.5 440.0v2.6M347.8 444.3v2.6M353.1 448.6v2.6M358.4 452.9v2.6M363.7 457.2v4.4M369.0 461.5v2.6M374.3 465.8v2.6M379.6 470.1v2.6M384.9 474.4v2.6M390.2 478.7v4.4M395.5 483.0v2.6" stroke="#fff" stroke-width="1.100"/>
<path d="M678 93L685.300 113" stroke="#fff" stroke-width="1.300"/>
<path d="M679.500 97l1.600-.5M681 101l1.600-.5M682.500 105l1.600-.5M684 109l1.600-.5" stroke="#fff" stroke-width=".9"/>
<path d="M687.500 95L694.500 117" stroke="#444" stroke-width="1.200" opacity=".45"/>
<path d="M302.800 453L296.800 431" stroke="#1030ff" stroke-width="1.200"/>
<path d="M302.800 453L326 443" stroke="#ff1a1a" stroke-width="1.200"/>
<path d="M302.800 453L289.500 444" stroke="#10c020" stroke-width="1.200"/>
<path d="M296.800 431l-1.500 3.500M296.800 431l2.300 2.800" stroke="#1030ff" stroke-width=".9"/>
<path d="M326 443l-3.500-.5M326 443l-2.500 2.800" stroke="#ff1a1a" stroke-width=".9"/>
<path d="M289.500 444l3.500 0M289.500 444l1.500 3" stroke="#10c020" stroke-width=".9"/>
<polygon points="449.700,456.900 468,447.100 480.400,453.300 460.900,463.100" fill="#d2d2e3" stroke="#d2d2e3" stroke-width=".5"/>
<polygon points="449.700,456.900 460.900,463.100 464.400,480.900 453.800,474.700" fill="#a6a6b8" stroke="#a6a6b8" stroke-width=".5"/>
<polygon points="460.900,463.100 480.400,453.300 484,472 464.400,480.900" fill="#d7d7e7" stroke="#d7d7e7" stroke-width=".5"/>
<g opacity=".99">
<text transform="matrix(.872 -.438 .219 1.112 465.800 475)" font-size="10.500" font-family="Liberation Sans, sans-serif" fill="#1a1a1a" stroke="#1a1a1a" stroke-width=".25">SW</text>
<text transform="matrix(.8 -.4 .933 .517 459.600 460.200)" font-size="9.200" font-family="Liberation Sans, sans-serif" fill="#2a2a2a" stroke="#2a2a2a" stroke-width=".25">SW</text>
<text transform="matrix(.12 .9 -.62 -.34 457.200 463.500)" font-size="7.500" font-family="Liberation Sans, sans-serif" fill="#333" opacity=".85">SW</text>
<polygon points="884.900,238.400 900,230 912,236 897,245" fill="#d2d2e3" stroke="#d2d2e3" stroke-width=".5"/>
<polygon points="884.900,238.400 897,245 903,266 891,257.400" fill="#c2c2d3" stroke="#c2c2d3" stroke-width=".5"/>
<polygon points="897,245 912,236 915,258 903,266" fill="#d7d7e7" stroke="#d7d7e7" stroke-width=".5"/>
<text transform="matrix(.76 -.4 .933 .517 892.500 241.300)" font-size="8.500" font-family="Liberation Sans, sans-serif" fill="#222">SO</text>
<text transform="matrix(.12 .9 -.62 -.34 893.200 246)" font-size="7.500" font-family="Liberation Sans, sans-serif" fill="#222" opacity=".9">SO</text>
</g>
<rect x="272" y="93" width="1.600" height="390" fill="#fff"/>
</svg>
<div class="a" style="left:272px;top:482.300px;width:628px;height:53.200px;background:#fff"></div>
<div class="a" style="left:272px;top:535.500px;width:628px;height:1.500px;background:#cfcfcf"></div>
<div class="a" style="left:523px;top:497px;width:12.300px;height:10.400px;background:#dfe5f8"></div>
<div class="a" style="left:541.300px;top:497px;width:49.500px;height:10.400px;background:#b4c4f2"></div>
<svg class="a" style="left:0;top:0" width="900" height="537" viewBox="0 0 900 537" fill="none">
<!-- radios -->
<circle cx="305.300" cy="503.300" r="3.700" fill="#d3dbf6" stroke="#4a4f5e" stroke-width="1"/>
<circle cx="305.300" cy="516.600" r="3.700" fill="#d3dbf6" stroke="#4a4f5e" stroke-width="1"/>
<circle cx="305.300" cy="516.600" r="1.200" fill="#111"/>
<!-- checkboxes -->
<g stroke="#3a3f55" stroke-width="1.200" fill="#cfd3f4">
<rect x="288.500" y="525.500" width="6.900" height="6.900" rx="1"/>
<rect x="414.300" y="500" width="6.900" height="6.900" rx="1"/>
<rect x="414.300" y="513.200" width="6.900" height="6.900" rx="1"/>
</g>
<g stroke="#0d1230" stroke-width="1.200">
<path d="M290 529.400l1.500 1.700 2.700-4.600"/>
<path d="M415.800 503.900l1.500 1.700 2.700-4.600"/>
<path d="M415.800 517.100l1.500 1.700 2.700-4.600"/>
</g>
<!-- LBEG logo -->
<g font-family="Liberation Sans, sans-serif" font-weight="700" font-size="23.300" fill="#5b7fb4" stroke="#5b7fb4" stroke-width="1.800" stroke-linejoin="miter">
<text transform="translate(763.900 510.800) scale(.79 1)">L</text>
<text transform="translate(785.900 510.800) scale(.92 1)">E</text>
<text transform="translate(799.900 510.800) scale(.96 1)">G</text>
<rect x="777.500" y="496.500" width="8.500" height="13" stroke="none"/>
<text transform="translate(774.400 511.600) scale(.84 1)" font-size="25" fill="#fff" stroke="#fff" stroke-width="1.300">B</text>
</g>
<path d="M771.900 513.900h18.200l-9.100 5.900z" fill="#d8382f"/>
</svg>

<span class="t" style="left:17.00px;top:5.00px;font-size:9.8px;line-height:9.8px;font-weight:400;color:#000;transform:scale(0.8836,1);transform-origin:0 0;">GTA3D-C2718-Bremervörde.pdf - Adobe Acrobat Reader DC (32-bit)</span>
<span class="t" style="left:5.00px;top:19.00px;font-size:9.4px;line-height:9.4px;font-weight:400;color:#3a3a3a;transform:scale(0.9136,1);transform-origin:0 0;">Datei</span>
<span class="t" style="left:36.00px;top:19.00px;font-size:9.4px;line-height:9.4px;font-weight:400;color:#3a3a3a;transform:scale(0.9039,1);transform-origin:0 0;">Bearbeiten</span>
<span class="t" style="left:87.00px;top:19.00px;font-size:9.4px;line-height:9.4px;font-weight:400;color:#3a3a3a;transform:scale(0.9147,1);transform-origin:0 0;">Anzeige</span>
<span class="t" style="left:128.00px;top:19.00px;font-size:9.4px;line-height:9.4px;font-weight:400;color:#3a3a3a;transform:scale(0.9359,1);transform-origin:0 0;">Unterschreiben</span>
<span class="t" style="left:198.50px;top:19.00px;font-size:9.4px;line-height:9.4px;font-weight:400;color:#3a3a3a;transform:scale(0.8649,1);transform-origin:0 0;">Fenster</span>
<span class="t" style="left:237.00px;top:19.00px;font-size:9.4px;line-height:9.4px;font-weight:400;color:#3a3a3a;transform:scale(0.9432,1);transform-origin:0 0;">Hilfe</span>
<span class="t" style="left:12.30px;top:41.00px;font-size:11.5px;line-height:11.5px;font-weight:400;color:#555;transform:scale(0.9343,1);transform-origin:0 0;">Start</span>
<span class="t" style="left:60.00px;top:41.00px;font-size:11.5px;line-height:11.5px;font-weight:400;color:#555;transform:scale(0.9833,1);transform-origin:0 0;">Werkzeuge</span>
<span class="t" style="left:159.50px;top:41.00px;font-size:11px;line-height:11px;font-weight:400;color:#3a3a3a;transform:scale(0.9078,1);transform-origin:0 0;">GTA3D-C2718-Bre...</span>
<span class="t" style="left:299.50px;top:72.00px;font-size:9px;line-height:9px;font-weight:400;color:#555;">1</span>
<span class="t" style="left:316.50px;top:72.00px;font-size:9px;line-height:9px;font-weight:400;color:#555;transform:scale(1.1482,1);transform-origin:0 0;">/ 1</span>
<span class="t" style="left:495.00px;top:72.00px;font-size:9px;line-height:9px;font-weight:400;color:#555;transform:scale(0.9009,1);transform-origin:0 0;">66,1%</span>
<span class="t" style="left:45.70px;top:102.00px;font-size:12px;line-height:12px;font-weight:400;color:#505050;transform:scale(0.9291,1);transform-origin:0 0;">Modellhierarchie</span>
<span class="t" style="left:90.60px;top:135.00px;font-size:8.6px;line-height:8.6px;font-weight:700;color:#2a2a2a;transform:scale(0.9567,1);transform-origin:0 0;">Markierungsfarbe</span>
<span class="t" style="left:83.50px;top:163.00px;font-size:9.4px;line-height:9.4px;font-weight:400;color:#454545;transform:scale(0.9118,1);transform-origin:0 0;">05 Rupel bis Oberoligozaen</span>
<span class="t" style="left:83.50px;top:182.00px;font-size:9.4px;line-height:9.4px;font-weight:400;color:#454545;transform:scale(0.9257,1);transform-origin:0 0;">06 Mitteloligozaen bis Obere</span>
<span class="t" style="left:83.50px;top:202.00px;font-size:9.4px;line-height:9.4px;font-weight:400;color:#454545;transform:scale(0.8981,1);transform-origin:0 0;">07 Oberpalaeozaen bis Unter</span>
<span class="t" style="left:83.50px;top:221.00px;font-size:9.4px;line-height:9.4px;font-weight:400;color:#454545;transform:scale(0.9088,1);transform-origin:0 0;">08 Oberkreide</span>
<span class="t" style="left:83.50px;top:240.00px;font-size:9.4px;line-height:9.4px;font-weight:400;color:#454545;transform:scale(0.9217,1);transform-origin:0 0;">09 Marine Unterkreide</span>
<span class="t" style="left:83.50px;top:259.00px;font-size:9.4px;line-height:9.4px;font-weight:400;color:#454545;transform:scale(0.9166,1);transform-origin:0 0;">11 Dogger</span>
<span class="t" style="left:83.50px;top:278.00px;font-size:9.4px;line-height:9.4px;font-weight:400;color:#454545;transform:scale(0.8434,1);transform-origin:0 0;">12 Lias</span>
<span class="t" style="left:83.50px;top:297.00px;font-size:9.4px;line-height:9.4px;font-weight:400;color:#454545;transform:scale(0.8899,1);transform-origin:0 0;">13 Keuper</span>
<span class="t" style="left:83.50px;top:317.00px;font-size:9.4px;line-height:9.4px;font-weight:400;color:#454545;transform:scale(0.9261,1);transform-origin:0 0;">14 Roet und Muschelkalk</span>
<span class="t" style="left:150.30px;top:366.00px;font-size:9px;line-height:9px;font-weight:700;color:#2a2a2a;transform:scale(0.9190,1);transform-origin:0 0;">Optionen</span>
<span class="t" style="left:74.80px;top:387.00px;font-size:9px;line-height:9px;font-weight:400;color:#555;transform:scale(0.9566,1);transform-origin:0 0;">Blick nach Osten</span>
<span class="t" style="left:67.00px;top:441.00px;font-size:9px;line-height:9px;font-weight:400;color:#222;transform:scale(0.9736,1);transform-origin:0 0;text-shadow:0 0 .4px #222;">Blick von oben</span>
<span class="t" style="left:299.60px;top:485.00px;font-size:9.4px;line-height:9.4px;font-weight:700;color:#111;transform:scale(0.9485,1);transform-origin:0 0;">topografische Karte</span>
<span class="t" style="left:312.00px;top:499.00px;font-size:8.8px;line-height:8.8px;font-weight:400;color:#111;transform:scale(0.9966,1);transform-origin:0 0;">DTK 100</span>
<span class="t" style="left:312.00px;top:513.00px;font-size:8.8px;line-height:8.8px;font-weight:400;color:#111;transform:scale(0.9966,1);transform-origin:0 0;">DTK 500</span>
<span class="t" style="left:299.60px;top:524.00px;font-size:9.4px;line-height:9.4px;font-weight:700;color:#111;transform:scale(0.9459,1);transform-origin:0 0;">Karte der Salzstrukturen</span>
<span class="t" style="left:411.00px;top:485.00px;font-size:9.4px;line-height:9.4px;font-weight:700;color:#111;transform:scale(0.9454,1);transform-origin:0 0;">Kartenoptionen</span>
<span class="t" style="left:423.40px;top:499.00px;font-size:8.8px;line-height:8.8px;font-weight:400;color:#111;transform:scale(1.0028,1);transform-origin:0 0;">sichtbar</span>
<span class="t" style="left:423.40px;top:512.00px;font-size:8.8px;line-height:8.8px;font-weight:400;color:#111;transform:scale(1.0135,1);transform-origin:0 0;">transparent</span>
<span class="t" style="left:523.00px;top:485.00px;font-size:9.4px;line-height:9.4px;font-weight:700;color:#111;transform:scale(0.9513,1);transform-origin:0 0;">Modell skalieren</span>
<span class="t" style="left:527.50px;top:498.00px;font-size:9px;line-height:9px;font-weight:400;color:#223;">1</span>
<span class="t" style="left:544.70px;top:498.00px;font-size:9px;line-height:9px;font-weight:400;color:#1a2a5a;transform:scale(0.9826,1);transform-origin:0 0;">überhöhen</span>
<span class="t" style="left:621.60px;top:512.00px;font-size:9.4px;line-height:9.4px;font-weight:700;color:#111;transform:scale(0.9363,1);transform-origin:0 0;">1 Skaleneinheit (x,y)</span>
<span class="t" style="left:710.40px;top:515.00px;font-size:8.5px;line-height:8.5px;font-weight:400;color:#777;font-family:DejaVu Sans,sans-serif;">≙</span>
<span class="t" style="left:720.00px;top:512.00px;font-size:9.4px;line-height:9.4px;font-weight:700;color:#111;transform:scale(0.9120,1);transform-origin:0 0;">1000 m</span>
<span class="t" style="left:629.60px;top:524.00px;font-size:9.4px;line-height:9.4px;font-weight:700;color:#111;transform:scale(0.9340,1);transform-origin:0 0;">1 Skaleneinheit (z)</span>
<span class="t" style="left:710.40px;top:527.00px;font-size:8.5px;line-height:8.5px;font-weight:400;color:#777;font-family:DejaVu Sans,sans-serif;">≙</span>
<span class="t" style="left:724.60px;top:524.00px;font-size:9.4px;line-height:9.4px;font-weight:700;color:#111;transform:scale(0.9175,1);transform-origin:0 0;">200 m</span>
<span class="t" style="left:829.70px;top:494.00px;font-size:8px;line-height:8px;font-weight:400;color:#4a4a4a;transform:scale(0.9601,1);transform-origin:0 0;">Landesamt für</span>
<span class="t" style="left:829.70px;top:502.00px;font-size:8px;line-height:8px;font-weight:400;color:#4a4a4a;transform:scale(0.9411,1);transform-origin:0 0;">Bergbau, Energie</span>
<span class="t" style="left:829.70px;top:509.00px;font-size:8px;line-height:8px;font-weight:400;color:#4a4a4a;transform:scale(0.9455,1);transform-origin:0 0;">und Geologie</span>
<span class="t" style="left:764.00px;top:528.00px;font-size:6.9px;line-height:6.9px;font-weight:700;color:#4f74ad;letter-spacing:2.124px;/*ls*/"><span style="color:#2e3f66">G</span>EO<span style="color:#2e3f66">Z</span>ENTRUM HANNOVER</span>
</body></html>
